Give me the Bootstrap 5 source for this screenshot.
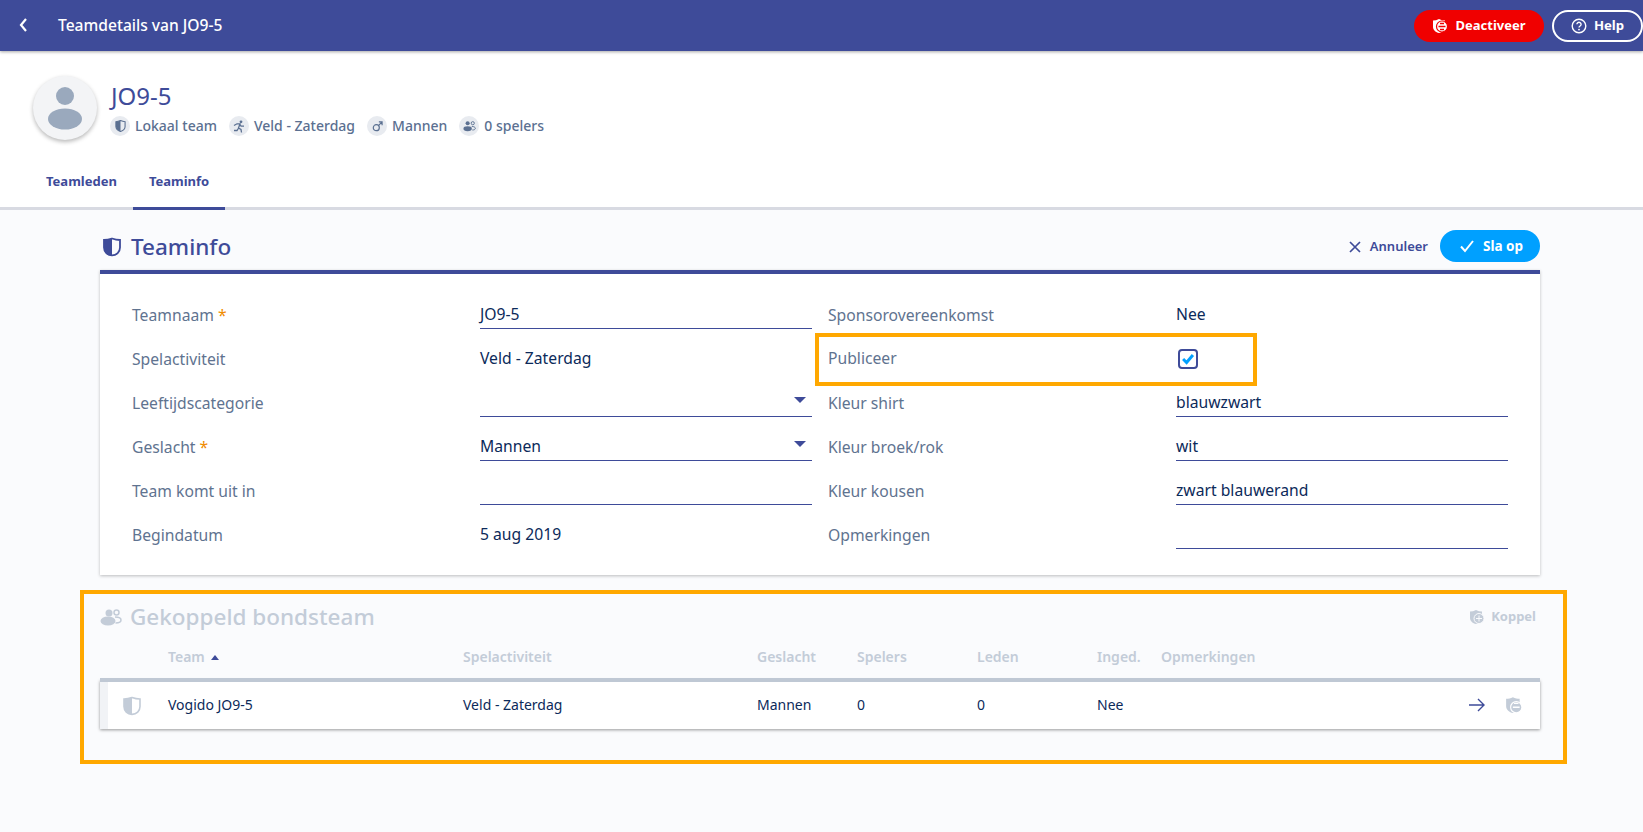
<!DOCTYPE html>
<html lang="nl"><head><meta charset="utf-8"><title>Teamdetails</title>
<link href="https://cdn.jsdelivr.net/npm/bootstrap@5.3.0/dist/css/bootstrap.min.css" rel="stylesheet">
<style>
body{background:#fafbfd;font-family:"Noto Sans","Open Sans",sans-serif;color:#0c2a5a;font-size:15px;height:832px;overflow:hidden}
.topbar{height:51px;background:#3e4b99;box-shadow:0 1px 3px rgba(0,0,0,.35);padding:0 0 0 18px;position:relative;z-index:2}
.topbar-title{color:#fff;font-size:15.6px;font-weight:500;margin-left:30px;font-family:"Noto Sans",sans-serif}
.pill{height:32px;border-radius:16px;font-size:13.5px;font-weight:700;display:inline-flex;align-items:center;justify-content:center;font-family:"Noto Sans",sans-serif;color:#fff}
.pill-red{background:#f00000;width:130px;gap:7px;margin-right:8px;font-size:13px}
.pill-help{border:2px solid #fff;width:91px;gap:7px;background:transparent;font-size:13.2px}
.head{background:#fff;height:159px;border-bottom:3px solid #d8dae2;position:relative}
.head-top{padding:23px 0 0 33px}
.avatar{width:64px;height:64px;border-radius:50%;background:#f3f4f6;box-shadow:0 2px 4px rgba(0,0,0,.28);margin-top:2px}
.team-name{font-size:24px;line-height:28px;color:#3e4b99;margin:8px 0 0 2px;font-weight:400}
.chips{margin-top:6px;font-size:14px;color:#5b7091;font-weight:500;gap:12px;line-height:20px;margin-left:1px}
.chip-ic{width:20px;height:20px;border-radius:50%;background:#e8ebf0;display:inline-flex;align-items:center;justify-content:center;margin-right:5px}
.tabs-row{position:absolute;left:30px;bottom:-3px;font-size:13px;font-weight:700;color:#3e4b99}
.tab-it{padding:0 16px;height:41px;line-height:24px;width:auto;border-bottom:3px solid transparent}
.tab-it.on{border-bottom-color:#3e4b99}
.main-wrap{margin-left:100px;width:1440px}
.sect-head{height:60px;padding-top:22px}
.sect-head .pill{position:relative;top:-2px}
.sect-head .act-cancel{position:relative;top:-1px}
.sect-title{font-size:22.5px;line-height:30px;color:#3e4b99;font-weight:500;margin:0;display:flex;align-items:center;gap:10px}
.sect-head .sect-title{padding-left:3px}
.act-cancel{color:#3e4b99;font-size:13px;font-weight:600;gap:8px;margin-right:12px}
.pill-save{background:#00a0ff;width:100px;gap:8px;padding-left:2px}
.info-card{background:#fff;border-top:4px solid #3e4b99;box-shadow:0 1px 3px rgba(0,0,0,.25);padding:18px 32px 16px;height:305px;border-radius:0}
.form-cols{display:grid;grid-template-columns:1fr 1fr;column-gap:16px}
.fld{display:grid;grid-template-columns:348px 332px;height:44px;align-items:center;position:relative}
.fld-l{color:#5f7390;font-size:15.7px;padding-top:4px}
.fld-l.up{padding-top:2px}
.fld-l i{color:#f08c00;font-style:normal}
.fld-v{font-size:15.7px;height:30px;line-height:30px;color:#0c2a5a;position:relative}
.fld-v.line{border-bottom:1px solid #3e4b99}
.fld-v .car{position:absolute;right:6px;top:10px;width:0;height:0;border-left:6px solid transparent;border-right:6px solid transparent;border-top:6px solid #3e4b99}
.hl{position:absolute;left:-13px;top:-3px;width:442px;height:53px;border:4px solid #ffa800;pointer-events:none}
.cbx{width:20px;height:20px;border:2px solid #3e4b99;border-radius:4px;display:flex;align-items:center;justify-content:center;margin-left:2px;margin-top:2px}
.linked{margin:15px 0 0 -20px;width:1487px;height:174px;border:4px solid #ffa800;padding:0 23px 0 16px}
.sect-muted{height:53px;padding-top:8px}
.sect-muted .sect-title{color:#c3ccd8;gap:8px}
.act-koppel{color:#c3ccd8;font-size:13px;font-weight:700;gap:6px;margin-right:4px;margin-top:5px}
.tbl{table-layout:fixed;width:1440px;margin:0;--bs-table-bg:transparent}
.tbl th{font-size:14px;line-height:19px;font-weight:600;color:#c3ccd8;border-bottom:4px solid #bfc8d4;height:28px;padding:0 0 12px;vertical-align:middle}
.tbl td{height:49px;background:#fff;font-size:14px;color:#0c2a5a;padding:0 0 2px;vertical-align:middle;border:0}
.tbl tbody tr{box-shadow:0 1px 3px rgba(0,0,0,.4)}
.tbl>tbody>tr>td.strip{box-shadow:inset 8px 0 0 #f1f3f6}
.sort-car{display:inline-block;width:0;height:0;border-left:4px solid transparent;border-right:4px solid transparent;border-bottom:5px solid #3e4b99;margin:0 0 2px 6px}
</style></head><body>
<nav class="topbar d-flex align-items-center justify-content-between">
 <div class="d-flex align-items-center">
  <svg width="10" height="16" viewBox="0 0 10 16"><path d="M8 2 3 8l5 6" fill="none" stroke="#fff" stroke-width="2.2"/></svg>
  <span class="topbar-title">Teamdetails van JO9-5</span>
 </div>
 <div class="d-flex align-items-center">
  <span class="pill pill-red"><svg width="16" height="16" viewBox="0 0 16 16"><path d="M1 2.500C3 2.500 5 2 7 1c2 1 4 1.500 6 1.500V9c0 3-3 5.500-6 6-3-.5-6-3-6-6z" fill="#fff"/><circle cx="10" cy="8.500" r="5.500" fill="#fff" stroke="#f00000" stroke-width="1.200"/><path d="M6.500 8.500h7M8 5.500h4M8 11.500h4" stroke="#f00000" stroke-width="1.300"/></svg>Deactiveer</span>
  <span class="pill pill-help"><svg width="16" height="16" viewBox="0 0 16 16"><circle cx="8" cy="8" r="6.800" fill="none" stroke="#fff" stroke-width="1.400"/><path d="M5.900 6.300a2.100 2 0 1 1 3.200 1.700c-.8.500-1.100.9-1.100 1.600" fill="none" stroke="#fff" stroke-width="1.400"/><circle cx="8" cy="11.600" r=".9" fill="#fff"/></svg>Help</span>
 </div>
</nav>
<header class="head">
 <div class="head-top d-flex gap-2">
  <div class="avatar d-flex align-items-center justify-content-center flex-shrink-0"><svg width="40" height="54" viewBox="0 0 40 54"><circle cx="20" cy="15" r="9" fill="#9aa9bd"/><ellipse cx="20" cy="38" rx="17" ry="10.500" fill="#9aa9bd"/></svg></div>
  <div class="ms-1">
   <h1 class="team-name">JO9-5</h1>
   <div class="chips d-flex">
    <span class="d-flex align-items-center"><span class="chip-ic"><svg width="11" height="12" viewBox="0 0 12 13"><path d="M1 1.800C3 1.800 4.500 1.300 6 .6c1.500.7 3 1.200 5 1.200V7c0 2.800-2.500 4.700-5 5.500C3.500 11.700 1 9.800 1 7z" fill="none" stroke="#5b7091" stroke-width="1.200"/><path d="M1 1.800C3 1.800 4.500 1.300 6 .6v11.900C3.500 11.700 1 9.800 1 7z" fill="#5b7091"/></svg></span>Lokaal team</span>
    <span class="d-flex align-items-center"><span class="chip-ic"><svg width="12" height="13" viewBox="0 0 12 13"><circle cx="8" cy="1.800" r="1.400" fill="#5b7091"/><path d="M1 5.500 4 3.800h3L5.500 8l2.500 1.500.5 3M5.300 8.500 4 10.500H1M7 4.500l1 1.700h3" fill="none" stroke="#5b7091" stroke-width="1.300"/></svg></span>Veld - Zaterdag</span>
    <span class="d-flex align-items-center"><span class="chip-ic"><svg width="11" height="11" viewBox="0 0 12 12"><circle cx="4.700" cy="7.300" r="3.300" fill="none" stroke="#5b7091" stroke-width="1.300"/><path d="M7 5l4-4M7.500 1H11v3.500" fill="none" stroke="#5b7091" stroke-width="1.300"/></svg></span>Mannen</span>
    <span class="d-flex align-items-center"><span class="chip-ic"><svg width="13" height="12" viewBox="0 0 14 12"><circle cx="5" cy="3" r="2.200" fill="#5b7091"/><circle cx="10.500" cy="3" r="1.700" fill="none" stroke="#5b7091"/><ellipse cx="5" cy="9" rx="4.500" ry="2.600" fill="#5b7091"/><path d="M9.500 6.500c2 0 3.800.7 3.800 2s-1.500 1.800-3.300 1.800" fill="none" stroke="#5b7091"/></svg></span>0 spelers</span>
   </div>
  </div>
 </div>
 <div class="tabs-row d-flex"><span class="tab-it">Teamleden</span><span class="tab-it on">Teaminfo</span></div>
</header>
<main class="main-wrap">
 <div class="sect-head d-flex justify-content-between align-items-start">
  <h2 class="sect-title"><svg width="18" height="20" viewBox="0 0 18 20"><path d="M1 3C4 3 6.500 2.400 9 1.500c2.500.9 5 1.500 8 1.500v7.500c0 4.500-3.500 7.700-8 7.900-4.500-.2-8-3.400-8-7.900z" fill="none" stroke="#3e4b99" stroke-width="1.800"/><path d="M1 3C4 3 6.500 2.400 9 1.500v16.900c-4.500-.2-8-3.400-8-7.900z" fill="#3e4b99"/></svg>Teaminfo</h2>
  <div class="d-flex align-items-center">
   <span class="act-cancel d-flex align-items-center"><svg width="14" height="14" viewBox="0 0 14 14"><path d="M2 2l10 10M12 2 2 12" stroke="#3e4b99" stroke-width="1.700"/></svg>Annuleer</span>
   <span class="pill pill-save"><svg width="16" height="14" viewBox="0 0 16 14"><path d="M2 7.500 6 12 14 2" fill="none" stroke="#fff" stroke-width="2"/></svg>Sla op</span>
  </div>
 </div>
 <section class="info-card">
  <div class="form-cols">
   <div class="fld"><span class="fld-l">Teamnaam <i>*</i></span><span class="fld-v line">JO9-5</span></div>
   <div class="fld"><span class="fld-l">Sponsorovereenkomst</span><span class="fld-v">Nee</span></div>
   <div class="fld"><span class="fld-l">Spelactiviteit</span><span class="fld-v">Veld - Zaterdag</span></div>
   <div class="fld"><span class="hl"></span><span class="fld-l up">Publiceer</span><span class="cbx"><svg width="14" height="12" viewBox="0 0 12 11"><path d="M1.500 5.500 4.700 8.700 10.500 1.800" fill="none" stroke="#00a0ff" stroke-width="2.700"/></svg></span></div>
   <div class="fld"><span class="fld-l">Leeftijdscategorie</span><span class="fld-v line"><span class="car"></span></span></div>
   <div class="fld"><span class="fld-l">Kleur shirt</span><span class="fld-v line">blauwzwart</span></div>
   <div class="fld"><span class="fld-l">Geslacht <i>*</i></span><span class="fld-v line">Mannen<span class="car"></span></span></div>
   <div class="fld"><span class="fld-l">Kleur broek/rok</span><span class="fld-v line">wit</span></div>
   <div class="fld"><span class="fld-l">Team komt uit in</span><span class="fld-v line"></span></div>
   <div class="fld"><span class="fld-l">Kleur kousen</span><span class="fld-v line">zwart blauwerand</span></div>
   <div class="fld"><span class="fld-l">Begindatum</span><span class="fld-v">5 aug 2019</span></div>
   <div class="fld"><span class="fld-l">Opmerkingen</span><span class="fld-v line"></span></div>
  </div>
 </section>
 <section class="linked">
  <div class="sect-muted d-flex justify-content-between align-items-start">
   <h2 class="sect-title"><svg width="22" height="18" viewBox="0 0 22 18"><circle cx="9" cy="5" r="3.500" fill="#c3ccd8"/><circle cx="16.500" cy="4.500" r="2.500" fill="none" stroke="#c3ccd8" stroke-width="1.500"/><ellipse cx="8" cy="13" rx="7.500" ry="4.500" fill="#c3ccd8"/><path d="M15 9c3 0 6 1 6 3s-2.500 3-5.500 3" fill="none" stroke="#c3ccd8" stroke-width="1.500"/></svg>Gekoppeld bondsteam</h2>
   <span class="act-koppel d-flex align-items-center"><svg width="16" height="16" viewBox="0 0 16 16"><path d="M1 2.500C3 2.500 5 2 7 1c2 1 4 1.500 6 1.500V9c0 3-3 5.500-6 6-3-.5-6-3-6-6z" fill="#c3ccd8"/><circle cx="10" cy="9.500" r="5" fill="#c3ccd8" stroke="#fafbfd"/><path d="M7 9.500h6M10 6.500v6" stroke="#fafbfd"/></svg>Koppel</span>
  </div>
  <table class="table tbl">
   <colgroup><col style="width:68px"><col style="width:295px"><col style="width:294px"><col style="width:100px"><col style="width:120px"><col style="width:120px"><col style="width:64px"><col><col style="width:71px"></colgroup>
   <thead><tr><th></th><th>Team<span class="sort-car"></span></th><th>Spelactiviteit</th><th>Geslacht</th><th>Spelers</th><th>Leden</th><th>Inged.</th><th>Opmerkingen</th><th></th></tr></thead>
   <tbody><tr>
    <td class="strip"><svg width="18" height="20" viewBox="0 0 18 20" style="margin-left:23px"><path d="M1 3C4 3 6.500 2.400 9 1.500c2.500.9 5 1.500 8 1.500v7.500c0 4.500-3.500 7.700-8 7.900-4.500-.2-8-3.400-8-7.900z" fill="none" stroke="#c3ccd8" stroke-width="1.600"/><path d="M1 3C4 3 6.500 2.400 9 1.500v16.900c-4.500-.2-8-3.400-8-7.900z" fill="#c3ccd8"/></svg></td>
    <td>Vogido JO9-5</td><td>Veld - Zaterdag</td><td>Mannen</td><td>0</td><td>0</td><td>Nee</td><td></td>
    <td><div class="d-flex align-items-center gap-3"><svg width="16" height="14" viewBox="0 0 16 14"><path d="M0 7h15M9 1l6 6-6 6" fill="none" stroke="#3e4b99" stroke-width="1.400"/></svg><svg class="ms-1" width="18" height="18" viewBox="0 0 16 16"><path d="M1 2.500C3 2.500 5 2 7 1c2 1 4 1.500 6 1.500V9c0 3-3 5.500-6 6-3-.5-6-3-6-6z" fill="#c3ccd8"/><circle cx="10" cy="10" r="5" fill="#c3ccd8" stroke="#fff"/><path d="M7 10h6M8 6.500h4" stroke="#fff" stroke-width="1.200"/></svg></div></td>
   </tr></tbody>
  </table>
 </section>
</main>
<script src="https://cdn.jsdelivr.net/npm/bootstrap@5.3.0/dist/js/bootstrap.bundle.min.js"></script>
</body></html>
